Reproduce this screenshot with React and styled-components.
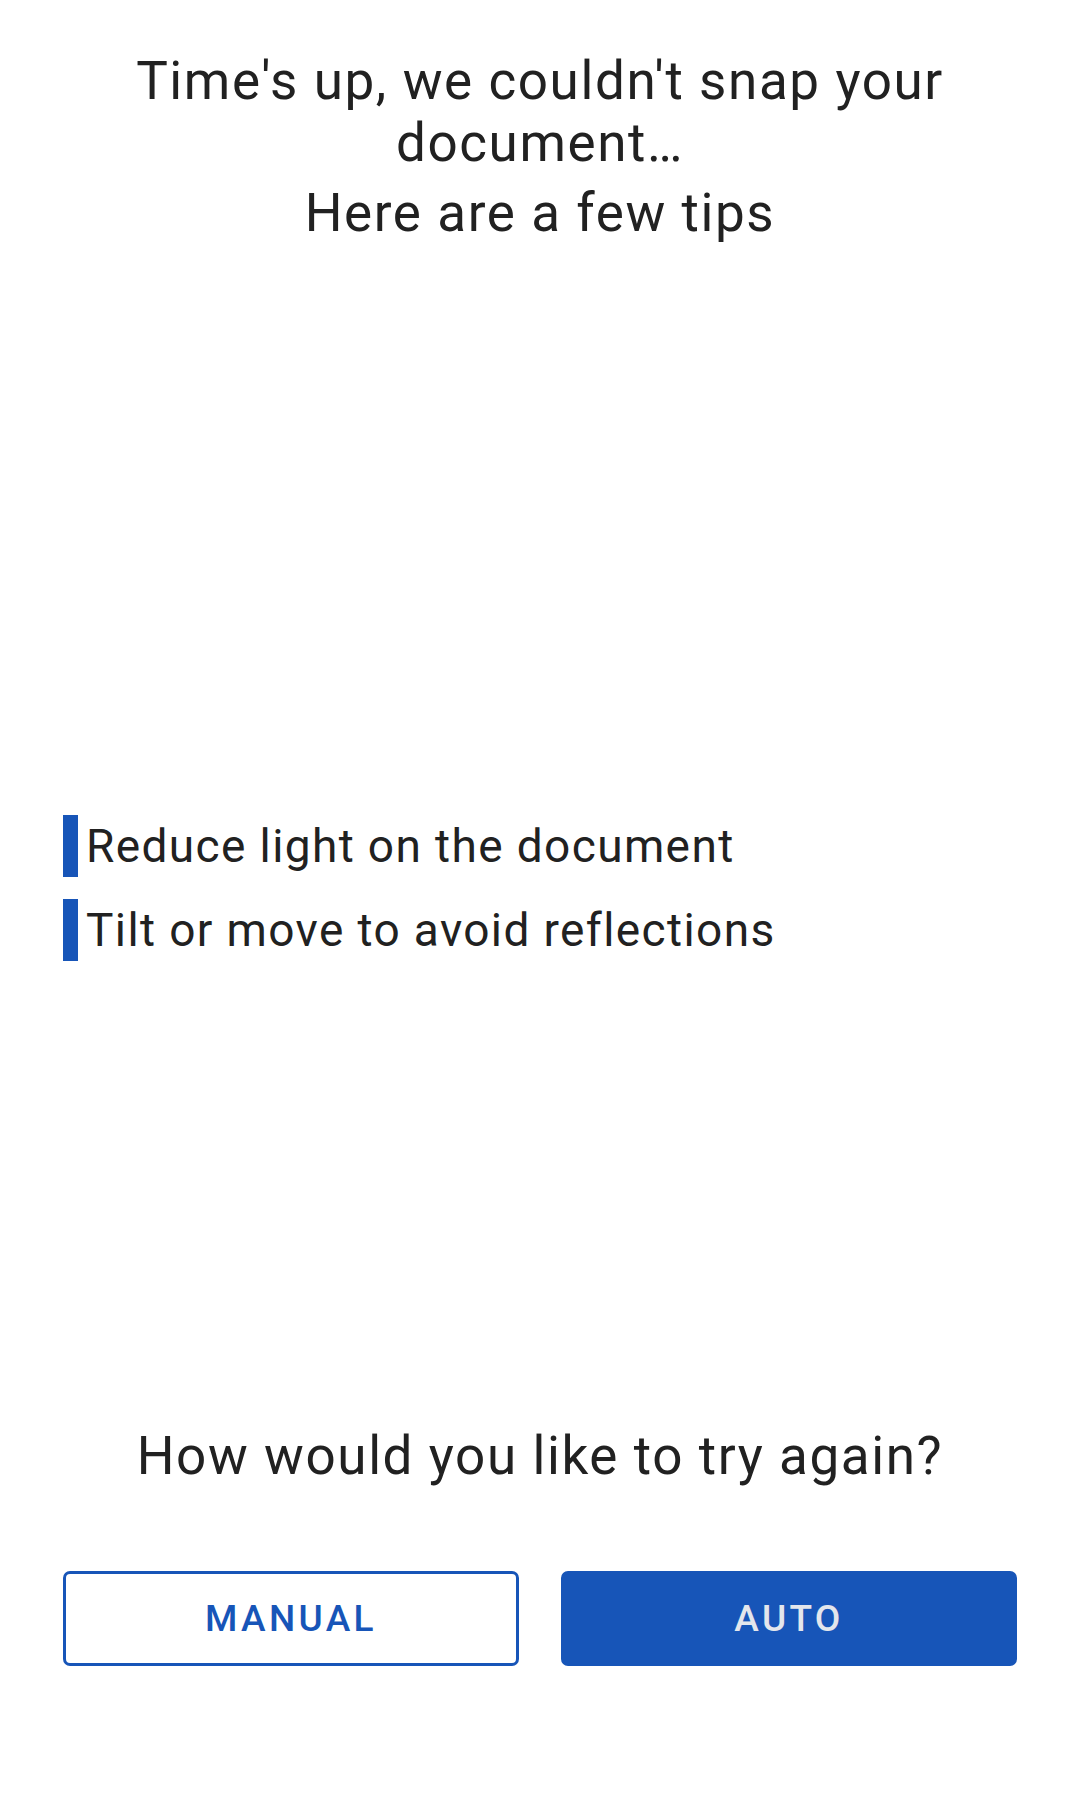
import React from "react";
import styled, { createGlobalStyle } from "styled-components";

const GlobalStyle = createGlobalStyle`
  html, body {
    margin: 0;
    padding: 0;
    background: #ffffff;
  }
  body {
    font-family: Roboto, "Noto Sans", sans-serif;
    color: #212121;
  }
`;

const BLUE = "#1755b8";

const Screen = styled.div`
  width: 1080px;
  min-height: 1794px;
  box-sizing: border-box;
  padding: 50px 63px 128px;
  display: flex;
  flex-direction: column;
`;

const Title = styled.h1`
  margin: 0;
  text-align: center;
  font-size: 53px;
  font-weight: 400;
  line-height: 62px;
  letter-spacing: 0.03em;
  color: #212121;
`;

const SubTitle = styled.p`
  margin: 8px 0 0;
  text-align: center;
  font-size: 53px;
  line-height: 62px;
  letter-spacing: 0.03em;
`;

const Middle = styled.div`
  flex: 1;
  display: flex;
  flex-direction: column;
  justify-content: center;
  gap: 22px;
  padding-top: 106px;
`;

const Tip = styled.div`
  display: flex;
  align-items: center;
  gap: 8px;
`;

const TipBar = styled.span`
  width: 15px;
  height: 62px;
  background: ${BLUE};
  flex-shrink: 0;
`;

const TipText = styled.span`
  font-size: 46px;
  line-height: 62px;
  letter-spacing: 0.03em;
`;

const Question = styled.p`
  margin: 0 0 84px;
  text-align: center;
  font-size: 53px;
  line-height: 62px;
  letter-spacing: 0.03em;
`;

const Buttons = styled.div`
  display: grid;
  grid-template-columns: 1fr 1fr;
  gap: 42px;
`;

const Button = styled.button`
  height: 95px;
  border-radius: 7px;
  border: 3px solid ${BLUE};
  background: ${(p) => (p.$filled ? BLUE : "#ffffff")};
  color: ${(p) => (p.$filled ? "#e3e6ec" : BLUE)};
  font-family: Roboto, sans-serif;
  font-weight: 500;
  font-size: 37px;
  letter-spacing: 0.09em;
  text-transform: uppercase;
  cursor: pointer;
`;

export default function App() {
  return (
    <>
      <GlobalStyle />
      <Screen>
        <Title>Time's up, we couldn't snap your document…</Title>
        <SubTitle>Here are a few tips</SubTitle>
        <Middle>
          <Tip>
            <TipBar />
            <TipText>Reduce light on the document</TipText>
          </Tip>
          <Tip>
            <TipBar />
            <TipText>Tilt or move to avoid reflections</TipText>
          </Tip>
        </Middle>
        <Question>How would you like to try again?</Question>
        <Buttons>
          <Button>Manual</Button>
          <Button $filled>Auto</Button>
        </Buttons>
      </Screen>
    </>
  );
}
